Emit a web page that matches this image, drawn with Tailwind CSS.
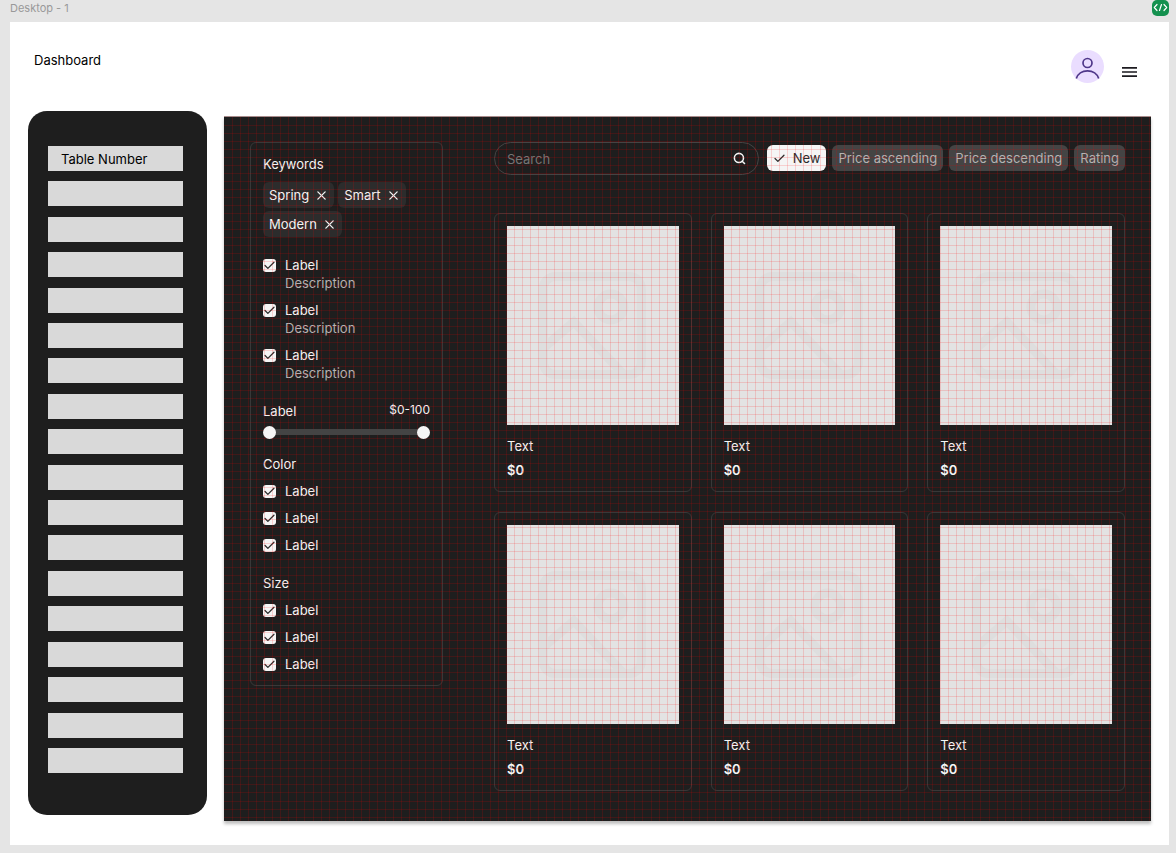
<!DOCTYPE html>
<html lang="en">
<head>
<meta charset="utf-8">
<title>Desktop - 1</title>
<script src="https://cdn.jsdelivr.net/npm/@tailwindcss/browser@4"></script>
</head>
<body class="min-h-screen bg-[#e5e5e5] pr-[7px] pb-2 pl-2.5 font-[Inter,sans-serif] text-[13px] leading-[18px] text-[#f5f5f5]">
<svg class="hidden" aria-hidden="true">
  <symbol id="x" viewBox="0 0 16 16"><path d="M12.500 3.500l-9 9M3.500 3.500l9 9" fill="none" stroke="currentColor" stroke-width="1.6" stroke-linecap="round"/></symbol>
  <symbol id="check" viewBox="0 0 16 16"><path d="M13.500 4 6 11.500 2.500 8" fill="none" stroke="currentColor" stroke-width="1.6" stroke-linecap="round" stroke-linejoin="round"/></symbol>
  <symbol id="photo" viewBox="0 0 172 199"><g fill="none" stroke="#dedede" stroke-width="9"><rect x="36.500" y="50.500" width="98" height="98" rx="12"/><circle cx="104" cy="81" r="13"/><path d="M36.500 122 67 96l50 52.500" stroke-linejoin="miter"/></g></symbol>
</svg>

<header class="flex h-[22px] items-start justify-between">
  <h1 class="text-[11px] leading-4 text-[#999]">Desktop - 1</h1>
  <button aria-label="Ready for development" class="h-4 w-[17px] overflow-hidden rounded-[5px] bg-[#14914f]">
    <svg viewBox="0 0 17 16" class="h-4 w-[17px]" fill="none" stroke="#fff" stroke-width="1.2" stroke-linecap="round" stroke-linejoin="round"><path d="M5 4.500 2.300 7.500 5 10.500M12 4.500l2.700 3-2.700 3M9.500 4.500l-2 6"/></svg>
  </button>
</header>

<main class="bg-white pr-[18px] pb-6 pl-[18px]">
  <div class="flex h-[89px] justify-between pt-7 pr-[14px] pl-1.5">
    <h2 class="pt-px text-black">Dashboard</h2>
    <div class="flex gap-[18px]">
      <button aria-label="Account" class="h-[33px] w-[33px]">
        <svg viewBox="0 0 33 33" class="h-[33px] w-[33px]"><circle cx="16.500" cy="16.500" r="16.500" fill="#eaddff"/><g fill="none" stroke="#4f378a" stroke-width="1.700"><circle cx="16.500" cy="13" r="4.500"/><path d="M5.300 28.500c1.400-4.500 5.800-7.600 11.200-7.600s9.800 3.100 11.200 7.600"/></g></svg>
      </button>
      <button aria-label="Menu" class="mt-4 h-3 w-[15px] self-start"><svg viewBox="0 0 15 12" class="h-3 w-[15px]" fill="none" stroke="#1d1b20" stroke-width="1.700"><path d="M0 1.900h15M0 6h15M0 10.200h15"/></svg></button>
    </div>
  </div>

  <div class="flex items-start gap-[17px]">
    <nav aria-label="Tables" class="w-[179px] shrink-0 rounded-[19px] bg-[#1e1e1e] pt-[35px] pr-6 pb-[42px] pl-5">
      <ul id="tables" class="flex flex-col justify-between h-[627px]">
        <li class="h-[25px] bg-[#d9d9d9] pt-1 pl-[13px] text-black"><a href="#">Table Number</a></li>
      </ul>
    </nav>

    <section id="panel" class="relative mt-[5px] flex min-w-0 flex-1 items-start justify-between gap-[51px] border-t border-[#a88c8c] bg-[#1e1e1e] px-[26px] pt-[25px] pb-[30px] shadow-[0_3px_3px_rgba(0,0,0,0.25)]">
      <canvas id="grid" class="pointer-events-none absolute inset-0 h-full w-full"></canvas>

      <form class="w-[193px] shrink-0 rounded-md border border-[#383838] p-3">
        <h3>Keywords</h3>
        <div class="mt-[9px] flex flex-wrap gap-x-1 gap-y-[3px]">
          <button type="button" class="flex h-[26px] items-center gap-1.5 rounded-md bg-[#2c2c2c] px-1.5">Spring<svg class="h-[13px] w-[13px]"><use href="#x"/></svg></button>
          <button type="button" class="flex h-[26px] items-center gap-1.5 rounded-md bg-[#2c2c2c] px-1.5">Smart<svg class="h-[13px] w-[13px]"><use href="#x"/></svg></button>
          <button type="button" class="flex h-[26px] items-center gap-1.5 rounded-md bg-[#2c2c2c] px-1.5">Modern<svg class="h-[13px] w-[13px]"><use href="#x"/></svg></button>
        </div>
        <div id="described" class="mt-[19px] flex flex-col gap-[9px]"></div>
        <div class="mt-5 flex justify-between"><label for="min">Label</label><output class="text-[12px] leading-4">$0-100</output></div>
        <div class="relative mt-[6px] h-[13px]">
          <div class="absolute top-[3px] right-1 left-1 h-1.5 bg-[#444]"></div>
          <input id="min" type="range" value="0" class="pointer-events-none absolute inset-0 m-0 h-[13px] w-full appearance-none bg-transparent [&::-webkit-slider-thumb]:pointer-events-auto [&::-webkit-slider-thumb]:h-[13px] [&::-webkit-slider-thumb]:w-[13px] [&::-webkit-slider-thumb]:appearance-none [&::-webkit-slider-thumb]:rounded-full [&::-webkit-slider-thumb]:bg-[#f5f5f5]">
          <input type="range" value="100" aria-label="Maximum price" class="pointer-events-none absolute inset-0 m-0 h-[13px] w-full appearance-none bg-transparent [&::-webkit-slider-thumb]:pointer-events-auto [&::-webkit-slider-thumb]:h-[13px] [&::-webkit-slider-thumb]:w-[13px] [&::-webkit-slider-thumb]:appearance-none [&::-webkit-slider-thumb]:rounded-full [&::-webkit-slider-thumb]:bg-[#f5f5f5]">
        </div>
        <fieldset class="mt-4"><legend>Color</legend><div id="colors" class="mt-[9px] flex flex-col gap-[9px]"></div></fieldset>
        <fieldset class="mt-5"><legend>Size</legend><div id="sizes" class="mt-[9px] flex flex-col gap-[9px]"></div></fieldset>
      </form>

      <div class="min-w-0 flex-1">
        <div class="flex items-start gap-2">
          <label class="flex h-[33px] min-w-0 flex-1 items-center rounded-full border border-[#444] px-3">
            <input type="search" aria-label="Search" placeholder="Search" class="min-w-0 flex-1 bg-transparent outline-none placeholder:text-[#757575]">
            <svg viewBox="0 0 16 16" class="h-[13px] w-[13px]" fill="none" stroke="#f5f5f5" stroke-width="1.900" stroke-linecap="round"><circle cx="7.300" cy="7.300" r="5.600"/><path d="m14.200 14.200-2.900-2.900"/></svg>
          </label>
          <div class="flex gap-1.5 pt-[3px]">
            <button class="flex h-[26px] items-center gap-[7px] rounded-md bg-[#f5f5f5] px-1.5 text-[#2c2c2c]"><svg class="h-[13px] w-[13px]"><use href="#check"/></svg>New</button>
            <button class="h-[26px] rounded-md bg-[#444] px-1.5 text-[#b3b3b3]">Price ascending</button>
            <button class="h-[26px] rounded-md bg-[#444] px-1.5 text-[#b3b3b3]">Price descending</button>
            <button class="h-[26px] rounded-md bg-[#444] px-1.5 text-[#b3b3b3]">Rating</button>
          </div>
        </div>
        <div id="cards" class="mt-[38px] grid grid-cols-3 gap-x-[19px] gap-y-5"></div>
      </div>
    </section>
  </div>
</main>

<template id="plain"><label class="flex h-[18px] items-center gap-[9px]"><input type="checkbox" checked class="absolute h-[13px] w-[13px] appearance-none"><svg class="h-[13px] w-[13px] rounded-[3px] bg-[#f5f5f5] text-[#2c2c2c]"><use href="#check"/></svg>Label</label></template>
<template id="rich"><div class="h-9"><label class="flex h-[18px] items-center gap-[9px]"><input type="checkbox" checked class="absolute h-[13px] w-[13px] appearance-none"><svg class="h-[13px] w-[13px] rounded-[3px] bg-[#f5f5f5] text-[#2c2c2c]"><use href="#check"/></svg>Label</label><p class="pl-[22px] text-[#b3b3b3]">Description</p></div></template>
<template id="card"><article class="h-[279px] rounded-md border border-[#383838] p-3"><svg viewBox="0 0 172 199" preserveAspectRatio="xMidYMid slice" class="h-[199px] w-full bg-[#e3e3e3]"><use href="#photo"/></svg><h3 class="mt-3">Text</h3><p class="mt-1.5 font-semibold">$0</p></article></template>

<script>
const fill = (target, source, count) => {
  for (let i = 0; i < count; i++) document.getElementById(target).append(document.getElementById(source).content.cloneNode(true));
};
fill('described', 'rich', 3);
fill('colors', 'plain', 3);
fill('sizes', 'plain', 3);
fill('cards', 'card', 6);
for (let i = 0; i < 17; i++) {
  const li = document.createElement('li');
  li.className = 'h-[25px] bg-[#d9d9d9]';
  document.getElementById('tables').append(li);
}
// Layout grid: 10-unit cells at the canvas zoom level, snapped to whole pixels.
const grid = document.getElementById('grid');
const drawGrid = () => {
  const w = grid.width = grid.clientWidth, h = grid.height = grid.clientHeight;
  const ctx = grid.getContext('2d'), step = 8.0475;
  ctx.fillStyle = 'rgba(255,0,0,0.15)';
  for (let x = 8.55; x < w; x += step) ctx.fillRect(Math.floor(x), 0, 1, h);
  for (let y = 8.04; y < h; y += step) ctx.fillRect(0, Math.floor(y), w, 1);
};
drawGrid();
new ResizeObserver(drawGrid).observe(grid);
</script>
</body>
</html>
